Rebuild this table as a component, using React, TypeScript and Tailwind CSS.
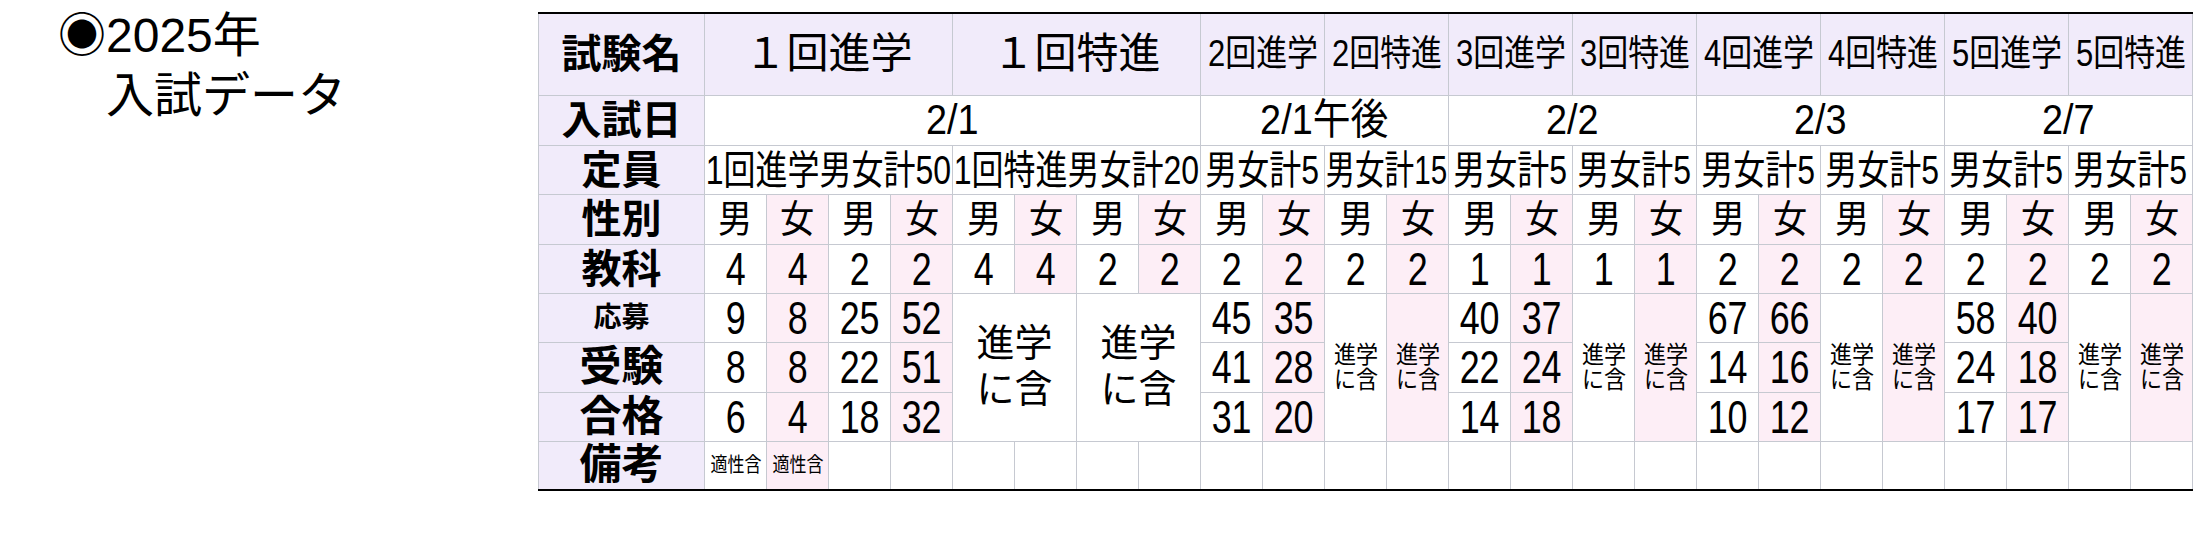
import React from "react";

const B = "border border-[#c6c9d1]";
const LAV = "bg-[#f1ebfa]";
const PINK = "bg-[#fdeef6]";

// condensed text, centred even when wider than its cell
const Sq = ({ children, className = "" }: { children: React.ReactNode; className?: string }) => (
  <div className="flex justify-center">
    <span className={`inline-block whitespace-nowrap ${className}`}>{children}</span>
  </div>
);

const Label = ({ children, size = "text-[40px]", top = false }: { children: React.ReactNode; size?: string; top?: boolean }) => (
  <td className={`${B} ${LAV} ${size} ${top ? "border-t-2 border-t-black" : ""} font-bold text-center leading-none`}>
    {children}
  </td>
);

const Num = ({ v, i }: { v: string; i: number }) => (
  <td className={`${B} ${i % 2 ? PINK : "bg-white"} text-center text-[46px] leading-none`}>
    <Sq className="scale-x-[0.78]">{v}</Sq>
  </td>
);

const BigIncl = () => (
  <td colSpan={2} rowSpan={3} className={`${B} bg-white text-center text-[38px] leading-[1.2]`}>
    進学
    <br />
    に含
  </td>
);

const SmallIncl = ({ pink }: { pink?: boolean }) => (
  <td rowSpan={3} className={`${B} ${pink ? PINK : "bg-white"} text-center text-[24px] leading-[1.05]`}>
    <Sq className="scale-x-[0.92]">
      進学
      <br />
      に含
    </Sq>
  </td>
);

const heads = ["2回進学", "2回特進", "3回進学", "3回特進", "4回進学", "4回特進", "5回進学", "5回特進"];
const capacity = ["男女計5", "男女計15", "男女計5", "男女計5", "男女計5", "男女計5", "男女計5", "男女計5"];
const subjects = ["4", "4", "2", "2", "4", "4", "2", "2", "2", "2", "2", "2", "1", "1", "1", "1", "2", "2", "2", "2", "2", "2", "2", "2"];

// later rounds: [男, 女] for 進学 columns, 特進 columns are 進学に含
const applied = [["45", "35"], ["40", "37"], ["67", "66"], ["58", "40"]];
const examined = [["41", "28"], ["22", "24"], ["14", "16"], ["24", "18"]];
const passed = [["31", "20"], ["14", "18"], ["10", "12"], ["17", "17"]];

export default function App() {
  return (
    <div className="flex w-[2210px] h-[560px] bg-white text-black font-['Liberation_Sans','Noto_Sans_CJK_JP',sans-serif]">
      <div className="w-[538px] shrink-0 pl-[58px] pt-[6px] text-[48px] leading-[60px]">
        <div>◉2025年</div>
        <div>　入試データ</div>
      </div>

      <div className="pt-[12px]">
        <table className="table-fixed border-collapse w-[1654px]">
          <colgroup>
            <col className="w-[166px]" />
            {subjects.map((_, i) => (
              <col key={i} className="w-[62px]" />
            ))}
          </colgroup>
          <tbody>
            <tr className="h-[82px]">
              <Label top>試験名</Label>
              <td colSpan={4} className={`${B} ${LAV} border-t-2 border-t-black text-center text-[42px] leading-none`}>
                １回進学
              </td>
              <td colSpan={4} className={`${B} ${LAV} border-t-2 border-t-black text-center text-[42px] leading-none`}>
                １回特進
              </td>
              {heads.map((h) => (
                <td key={h} colSpan={2} className={`${B} ${LAV} border-t-2 border-t-black text-center text-[36px] leading-none`}>
                  <Sq className="scale-x-[0.86]">{h}</Sq>
                </td>
              ))}
            </tr>

            <tr className="h-[50px]">
              <Label>入試日</Label>
              {[
                ["2/1", 8],
                ["2/1午後", 4],
                ["2/2", 4],
                ["2/3", 4],
                ["2/7", 4],
              ].map(([d, n]) => (
                <td key={d} colSpan={n as number} className={`${B} bg-white text-center text-[42px] leading-none`}>
                  <Sq className="scale-x-[0.9]">{d}</Sq>
                </td>
              ))}
            </tr>

            <tr className="h-[49px]">
              <Label>定員</Label>
              <td colSpan={4} className={`${B} bg-white text-center text-[40px] leading-none`}>
                <Sq className="scale-x-[0.8]">1回進学男女計50</Sq>
              </td>
              <td colSpan={4} className={`${B} bg-white text-center text-[40px] leading-none`}>
                <Sq className="scale-x-[0.8]">1回特進男女計20</Sq>
              </td>
              {capacity.map((c, i) => (
                <td key={i} colSpan={2} className={`${B} bg-white text-center text-[40px] leading-none`}>
                  <Sq className={c.length > 4 ? "scale-x-[0.74]" : "scale-x-[0.8]"}>{c}</Sq>
                </td>
              ))}
            </tr>

            <tr className="h-[50px]">
              <Label>性別</Label>
              {subjects.map((_, i) => (
                <td key={i} className={`${B} ${i % 2 ? PINK : "bg-white"} text-center text-[38px] leading-none`}>
                  <Sq className="scale-x-[0.9]">{i % 2 ? "女" : "男"}</Sq>
                </td>
              ))}
            </tr>

            <tr className="h-[49px]">
              <Label>教科</Label>
              {subjects.map((s, i) => (
                <Num key={i} v={s} i={i} />
              ))}
            </tr>

            <tr className="h-[49px]">
              <Label size="text-[28px]">応募</Label>
              {["9", "8", "25", "52"].map((v, i) => (
                <Num key={i} v={v} i={i} />
              ))}
              <BigIncl />
              <BigIncl />
              {applied.map(([m, f], k) => (
                <React.Fragment key={k}>
                  <Num v={m} i={0} />
                  <Num v={f} i={1} />
                  <SmallIncl />
                  <SmallIncl pink />
                </React.Fragment>
              ))}
            </tr>

            <tr className="h-[50px]">
              <Label size="text-[42px]">受験</Label>
              {["8", "8", "22", "51"].map((v, i) => (
                <Num key={i} v={v} i={i} />
              ))}
              {examined.map(([m, f], k) => (
                <React.Fragment key={k}>
                  <Num v={m} i={0} />
                  <Num v={f} i={1} />
                </React.Fragment>
              ))}
            </tr>

            <tr className="h-[49px]">
              <Label size="text-[42px]">合格</Label>
              {["6", "4", "18", "32"].map((v, i) => (
                <Num key={i} v={v} i={i} />
              ))}
              {passed.map(([m, f], k) => (
                <React.Fragment key={k}>
                  <Num v={m} i={0} />
                  <Num v={f} i={1} />
                </React.Fragment>
              ))}
            </tr>

            <tr className="h-[49px]">
              <td className={`${B} ${LAV} border-b-2 border-b-black text-center text-[42px] font-bold leading-none`}>備考</td>
              {subjects.map((_, i) => (
                <td
                  key={i}
                  className={`${B} ${i === 1 ? PINK : "bg-white"} border-b-2 border-b-black text-center text-[20px] leading-none`}
                >
                  {i < 2 && <Sq className="scale-x-[0.85]">適性含</Sq>}
                </td>
              ))}
            </tr>
          </tbody>
        </table>
      </div>
    </div>
  );
}
